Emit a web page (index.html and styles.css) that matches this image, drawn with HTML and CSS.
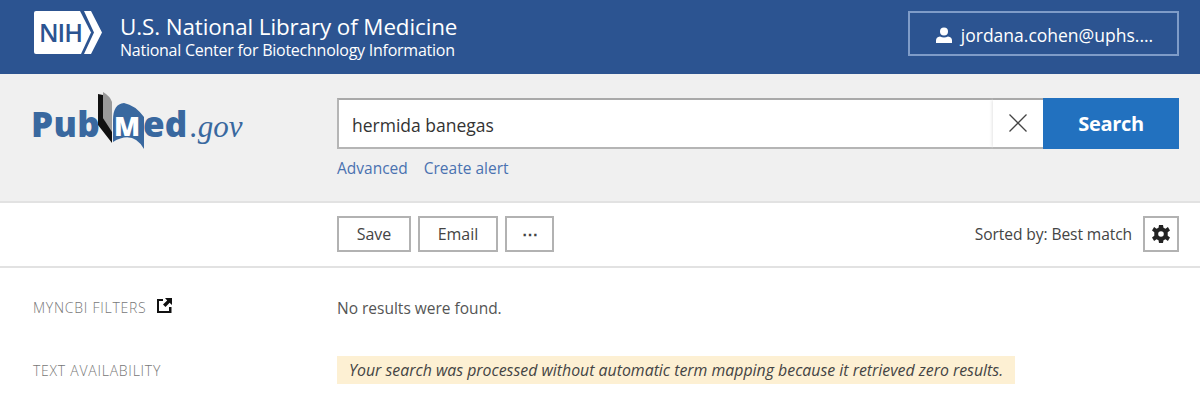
FILE: index.html
```html
<!DOCTYPE html>
<html lang="en">
<head>
    <meta charset="UTF-8">
    <meta name="viewport" content="width=device-width, initial-scale=1.0">
    <title>hermida banegas - Search Results - PubMed</title>
    <link rel="stylesheet" href="styles.css">
</head>
<body>

    <header class="ncbi-header">
        <div class="ncbi-brand">
            <svg class="nih-logo" width="70" height="46" viewBox="0 0 70 46">
                <path d="M3 1H47L58 22.500 48 44H3Q1 44 1 42V3Q1 1 3 1Z" fill="#fff"/>
                <path d="M51 1H58L69 22.500 58 44H51L61 22.500Z" fill="#fff"/>
                <text x="6" y="32" class="nih-text">NIH</text>
            </svg>
            <div class="ncbi-titles">
                <div class="ncbi-title">U.S. National Library of Medicine</div>
                <div class="ncbi-subtitle">National Center for Biotechnology Information</div>
            </div>
        </div>
        <button class="account-btn">
            <svg width="16" height="16" viewBox="0 0 16 16">
                <circle cx="8" cy="4.500" r="4" fill="#fff"/>
                <path d="M0 16V13.500Q0 10 4 9.500Q8 11.500 12 9.500Q16 10 16 13.500V16Z" fill="#fff"/>
            </svg>
            <span>jordana.cohen@uphs....</span>
        </button>
    </header>

    <section class="search-band">
        <svg class="pubmed-logo" width="214" height="60" viewBox="0 0 214 60">
            <text x="0" y="45" class="logo-word logo-pub">Pub</text>
            <path d="M72 0Q79 4 81 10V43L72 26Z" fill="#9a9a9a"/>
            <path d="M67 2L72 3V26L81 40V51L67 33Z" fill="#111"/>
            <path d="M82 50V28Q82 12 93 11Q104 13 113 25V57Q102 38 82 50Z" fill="#39689f"/>
            <text x="83" y="44" class="logo-m">M</text>
            <text x="112" y="45" class="logo-word">ed</text>
            <text x="159" y="45" class="logo-gov">.gov</text>
        </svg>
        <div class="search-col">
            <form class="search-form">
                <input class="search-input" type="text" value="hermida banegas">
                <button type="button" class="clear-btn">
                    <svg width="20" height="20" viewBox="0 0 20 20">
                        <path d="M1.500 1.500L18.500 18.500M18.500 1.500L1.500 18.500" stroke="#444" stroke-width="1.300" fill="none"/>
                    </svg>
                </button>
                <button type="submit" class="search-btn">Search</button>
            </form>
            <div class="search-links">
                <a href="#">Advanced</a>
                <a href="#">Create alert</a>
            </div>
        </div>
    </section>

    <section class="toolbar">
        <div class="actions">
            <button class="tool-btn save-btn">Save</button>
            <button class="tool-btn email-btn">Email</button>
            <button class="tool-btn more-btn">&#8943;</button>
        </div>
        <div class="sort">
            <span>Sorted by: Best match</span>
            <button class="gear-btn">
                <svg width="20" height="20" viewBox="0 0 20 20">
                    <path fill-rule="evenodd" fill="#222" d="M8 1H12L12.500 3.800L14.500 4.700L16.900 3.100L19 6.500L16.700 8.200V11.800L19 13.500L16.900 16.900L14.500 15.300L12.500 16.200L12 19H8L7.500 16.200L5.500 15.300L3.100 16.900L1 13.500L3.300 11.800V8.200L1 6.500L3.100 3.100L5.500 4.700L7.500 3.800ZM10 7.200A2.800 2.800 0 1 0 10 12.800A2.800 2.800 0 1 0 10 7.200Z"/>
                </svg>
            </button>
        </div>
    </section>

    <main class="results">
        <aside class="filters">
            <div class="filter-title">
                <span>MYNCBI FILTERS</span>
                <svg width="15" height="15" viewBox="0 0 15 15">
                    <path d="M0 1H6V3H2V13H12V9H14.500V15H0Z" fill="#111"/>
                    <path d="M8 0H15V7L12.600 4.800L8.500 9L6 6.500L10.200 2.400Z" fill="#111"/>
                </svg>
            </div>
            <div class="filter-title">
                <span>TEXT AVAILABILITY</span>
            </div>
        </aside>
        <div class="result-col">
            <p class="no-results">No results were found.</p>
            <p class="notice">Your search was processed without automatic term mapping because it retrieved zero results.</p>
        </div>
    </main>

</body>
</html>
```

FILE: styles.css
```css
:root {
    --nih-blue: #2c5491;
    --search-blue: #2271bf;
    --link-blue: #4a72b0;
    --band-gray: #f0f0f0;
    --line-gray: #e2e2e2;
    --btn-border: #b2b2b2;
    --text-dark: #444;
}

* {
    box-sizing: border-box;
}

html, body {
    height: 401px;
    overflow: hidden;
}

body {
    margin: 0;
    font-family: "Open Sans", "Noto Sans", Arial, sans-serif;
    color: var(--text-dark);
    background-color: #fff;
}

button, input {
    font-family: inherit;
}

.ncbi-header {
    height: 74px;
    background-color: var(--nih-blue);
    color: #fff;
    display: flex;
    justify-content: space-between;
    align-items: flex-start;
    padding: 11px 21px 0 33px;
}

.ncbi-brand {
    display: flex;
    gap: 17px;
}

.nih-logo {
    margin-top: -1px;
}

.nih-text {
    font-family: "Open Sans", Arial, sans-serif;
    font-size: 25px;
    font-weight: 600;
    letter-spacing: -1px;
    fill: var(--nih-blue);
}

.ncbi-titles {
    margin-top: 2px;
}

.ncbi-title {
    font-size: 22.400px;
    line-height: 28px;
    letter-spacing: -0.1px;
}

.ncbi-subtitle {
    font-size: 16px;
    line-height: 19px;
    letter-spacing: -0.25px;
}

.account-btn {
    width: 271px;
    height: 45px;
    background: transparent;
    border: 2px solid #7f9cc8;
    color: #fff;
    font-size: 17.500px;
    display: flex;
    justify-content: center;
    align-items: center;
    gap: 9px;
    padding: 2px 0 0 2px;
}

.search-band {
    height: 129px;
    background-color: var(--band-gray);
    border-bottom: 2px solid var(--line-gray);
    display: flex;
    padding: 18px 21px 0 31px;
}

.pubmed-logo {
    flex: none;
}

.logo-word {
    font-family: "Open Sans", Arial, sans-serif;
    font-size: 35px;
    font-weight: 800;
    fill: #39689f;
}

.logo-pub {
    letter-spacing: 0.4px;
}

.logo-m {
    font-family: "Open Sans", Arial, sans-serif;
    font-size: 27px;
    font-weight: 800;
    fill: #fff;
}

.logo-gov {
    font-family: "Liberation Serif", serif;
    font-size: 31px;
    font-style: italic;
    fill: #39689f;
}

.search-col {
    margin-left: 92px;
    flex: 1;
    padding-top: 6px;
}

.search-form {
    display: flex;
    height: 51px;
}

.search-input {
    flex: 1;
    min-width: 0;
    border: none;
    border-top: 2px solid #a9a9a9;
    border-bottom: 2px solid #b5b5b5;
    border-left: 2px solid #b5b5b5;
    padding: 2px 13px 0;
    font-size: 17.500px;
    color: #333;
    background-color: #fff;
}

.clear-btn {
    width: 50px;
    border: none;
    border-top: 2px solid #a9a9a9;
    border-bottom: 2px solid #b5b5b5;
    background-color: #fff;
    box-shadow: -3px 0 3px -2px #e4e4e4;
    display: flex;
    justify-content: center;
    align-items: center;
    padding: 0 0 2px;
}

.search-btn {
    width: 136px;
    border: none;
    background-color: var(--search-blue);
    color: #fff;
    font-size: 20px;
    font-weight: 700;
    letter-spacing: -0.3px;
    padding: 0;
}

.search-links {
    display: flex;
    gap: 16px;
    margin-top: 8px;
    font-size: 15.500px;
    line-height: 22px;
}

.search-links a {
    color: var(--link-blue);
    text-decoration: none;
}

.toolbar {
    height: 65px;
    border-bottom: 2px solid var(--line-gray);
    display: flex;
    justify-content: space-between;
    align-items: center;
    padding: 0 21px 1px 337px;
}

.actions {
    display: flex;
    gap: 7px;
}

.tool-btn {
    height: 36px;
    background-color: #fff;
    border: 2px solid var(--btn-border);
    color: var(--text-dark);
    font-size: 16px;
    padding: 0;
}

.save-btn {
    width: 74px;
}

.email-btn {
    width: 80px;
}

.more-btn {
    width: 49px;
    font-weight: 700;
}

.sort {
    display: flex;
    align-items: center;
    gap: 11px;
    font-size: 15.600px;
    letter-spacing: -0.1px;
}

.gear-btn {
    width: 36px;
    height: 36px;
    background-color: #fff;
    border: 2px solid var(--btn-border);
    display: flex;
    justify-content: center;
    align-items: center;
    padding: 0;
}

.results {
    display: flex;
    padding: 29px 0 0 33px;
}

.filters {
    width: 304px;
    display: flex;
    flex-direction: column;
    gap: 43px;
}

.filter-title {
    display: flex;
    align-items: center;
    gap: 11px;
    height: 20px;
    font-size: 14px;
    font-weight: 300;
    letter-spacing: 0.75px;
    color: #777;
}

.filter-title svg {
    margin-top: -3px;
}

.result-col {
    flex: 1;
}

.no-results {
    margin: 0;
    font-size: 15.500px;
    line-height: 22px;
    color: #555;
}

.notice {
    display: inline-block;
    margin: 37px 0 0;
    padding: 0 12px;
    height: 28px;
    line-height: 29px;
    font-size: 15.870px;
    font-style: italic;
    color: #444;
    background-color: #fdf0d3;
}
```
